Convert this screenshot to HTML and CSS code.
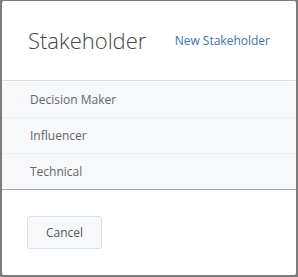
FILE: index.html
```html
<!DOCTYPE html>
<html lang="en">
<head>
  <meta charset="UTF-8">
  <title>Stakeholder</title>
  <link rel="stylesheet" href="styles.css">
</head>
<body>
  <div id="modal">
    <div class="modalHeader">
      <h2 class="modalTitle">Stakeholder</h2>
      <a href="#" class="newLink">New Stakeholder</a>
    </div>
    <ul class="optionList">
      <li class="option">Decision Maker</li>
      <li class="option">Influencer</li>
      <li class="option">Technical</li>
    </ul>
    <div class="modalFooter">
      <button class="button">Cancel</button>
    </div>
  </div>
</body>
</html>
```

FILE: styles.css
```css
html, body {
  margin: 0;
  padding: 0;
  height: 100%;
}
body {
  background-color: #7c7c7c;
  font-family: 'Open Sans', sans-serif;
  padding: 1px 2px 2px 2px;
  box-sizing: border-box;
}
#modal {
  background-color: #ffffff;
  height: 100%;
  border-radius: 2px;
  overflow: hidden;
}
.modalHeader {
  display: flex;
  align-items: center;
  justify-content: space-between;
  height: 79px;
  padding: 0 26px 0 26px;
  border-bottom: 1px solid #dcdfe3;
}
.modalTitle {
  margin: 0 0 2px 0;
  font-size: 22px;
  font-weight: 300;
  color: #444444;
}
.newLink {
  color: #3a74b3;
  font-size: 12px;
  text-decoration: none;
}
.optionList {
  list-style: none;
  margin: 0;
  padding: 0;
  background-color: #f7f8fa;
  border-top: 1px solid #ffffff;
  border-bottom: 1px solid #a9abad;
}
.option {
  height: 35px;
  line-height: 35px;
  padding-left: 28px;
  font-size: 12px;
  color: #666666;
  border-top: 1px solid #eceef0;
}
.option:first-child {
  border-top: none;
}
.modalFooter {
  padding: 26px 25px;
}
.button {
  width: 75px;
  height: 33px;
  background-color: #f7f8fa;
  border: 1px solid #dcdfe3;
  border-radius: 3px;
  font-family: 'Open Sans', sans-serif;
  font-size: 12px;
  color: #555555;
  cursor: pointer;
}
```
